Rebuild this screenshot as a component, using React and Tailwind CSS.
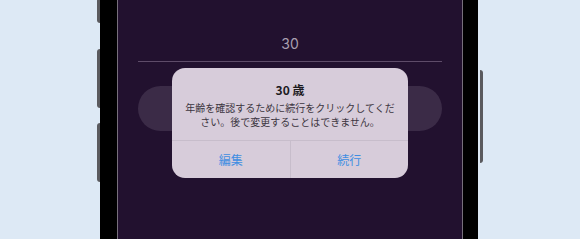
export default function App() {
  return (
    <div
      className="relative h-[239px] w-[580px] overflow-hidden bg-[#dde9f5]"
      style={{ fontFamily: '"Noto Sans CJK JP", "Noto Sans", sans-serif' }}
    >
      <div className="relative ml-[100px] flex h-full w-[378px] bg-black pl-[17px] pr-[15px]">
        {/* side buttons */}
        <div className="absolute left-[-3px] top-[-2px] h-[25px] w-[3px] rounded-l-sm bg-[#5a5a5e]" />
        <div className="absolute left-[-3px] top-[49px] h-[59px] w-[3px] rounded-l-sm bg-[#5a5a5e]" />
        <div className="absolute left-[-3px] top-[123px] h-[59px] w-[3px] rounded-l-sm bg-[#5a5a5e]" />
        <div className="absolute right-[-5px] top-[70px] h-[93px] w-[3px] rounded-r-sm bg-[#5a5a5e]" />

        <div className="relative flex flex-1 flex-col border-x border-[#77707c] bg-[#22112f] px-[20px]">
          <div className="pt-[35px] text-center text-[14px] leading-[18px] text-[#a99fb0]" style={{ fontFamily: 'Inter, "Noto Sans", sans-serif' }}>
            30
          </div>
          <div className="mt-[8px] h-px bg-[#5e4c69]" />
          <div className="mt-[24px] h-[45px] rounded-full bg-[#3b2b47]" />

          <div className="absolute left-[54px] top-[68px] flex h-[110px] w-[236px] flex-col rounded-[13px] bg-[#d7ccda]">
            <div className="pt-[14px] text-center text-[12px] font-bold leading-[16px] text-[#1c1a1e]">
              30 歳
            </div>
            <div className="mt-[3px] whitespace-nowrap text-center text-[10px] leading-[14px] text-[#3c3540]">
              年齢を確認するために続行をクリックしてくだ
              <br />
              さい。後で変更することはできません。
            </div>
            <div className="mt-[11px] flex h-[38px] border-t border-[#c7bdcb]">
              <div className="flex flex-1 items-center justify-center text-[12px] text-[#3f8ee2]">編集</div>
              <div className="w-px bg-[#c7bdcb]" />
              <div className="flex flex-1 items-center justify-center text-[12px] text-[#3f8ee2]">続行</div>
            </div>
          </div>
        </div>
      </div>
    </div>
  );
}
